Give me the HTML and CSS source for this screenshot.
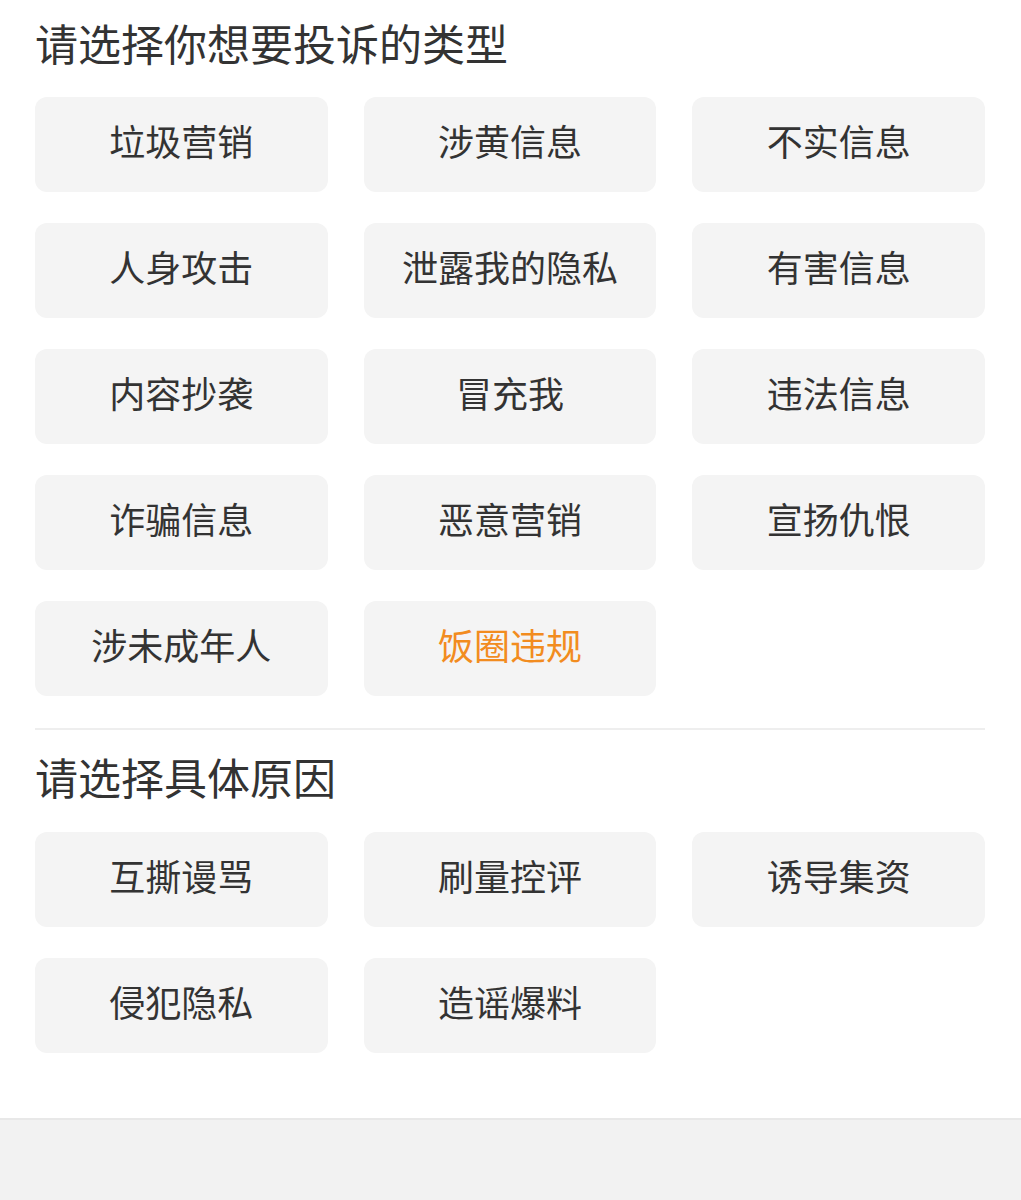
FILE: index.html
```html
<!DOCTYPE html>
<html lang="zh-CN">
<head>
<meta charset="utf-8">
<title>投诉类型</title>
<link rel="stylesheet" href="styles.css">
</head>
<body>
<div class="page">
  <section class="section">
    <h2 class="title">请选择你想要投诉的类型</h2>
    <div class="grid">
      <div class="opt">垃圾营销</div>
      <div class="opt">涉黄信息</div>
      <div class="opt">不实信息</div>
      <div class="opt">人身攻击</div>
      <div class="opt">泄露我的隐私</div>
      <div class="opt">有害信息</div>
      <div class="opt">内容抄袭</div>
      <div class="opt">冒充我</div>
      <div class="opt">违法信息</div>
      <div class="opt">诈骗信息</div>
      <div class="opt">恶意营销</div>
      <div class="opt">宣扬仇恨</div>
      <div class="opt">涉未成年人</div>
      <div class="opt active">饭圈违规</div>
    </div>
  </section>
  <div class="divider"></div>
  <section class="section second">
    <h2 class="title">请选择具体原因</h2>
    <div class="grid">
      <div class="opt">互撕谩骂</div>
      <div class="opt">刷量控评</div>
      <div class="opt">诱导集资</div>
      <div class="opt">侵犯隐私</div>
      <div class="opt">造谣爆料</div>
    </div>
  </section>
</div>
<div class="footer"></div>
</body>
</html>
```
FILE: styles.css
```css
html, body {
  margin: 0;
  padding: 0;
  background: #ffffff;
}
body {
  font-family: "Noto Sans CJK SC", "Noto Sans", sans-serif;
  color: #333333;
}
.page {
  padding: 14px 36px 0 35px;
  height: 1104px;
  box-sizing: border-box;
}
.title {
  margin: 0 0 26px 0;
  font-size: 43px;
  font-weight: 400;
  line-height: 57px;
  color: #333333;
}
.grid {
  display: grid;
  grid-template-columns: repeat(3, 1fr);
  column-gap: 36px;
  row-gap: 31px;
}
.opt {
  height: 95px;
  box-sizing: border-box;
  padding-bottom: 10px;
  background: #f4f4f4;
  border-radius: 12px;
  display: flex;
  align-items: center;
  justify-content: center;
  font-size: 36px;
  color: #333333;
}
.opt.active {
  color: #f28c1f;
}
.divider {
  height: 2px;
  background: #eeeeee;
  margin: 32px 0 18px 0;
}
.second .title {
  margin-bottom: 27px;
}
.footer {
  height: 82px;
  background: #f2f2f2;
  border-top: 2px solid #e8e8e8;
  margin-top: 14px;
}
```
